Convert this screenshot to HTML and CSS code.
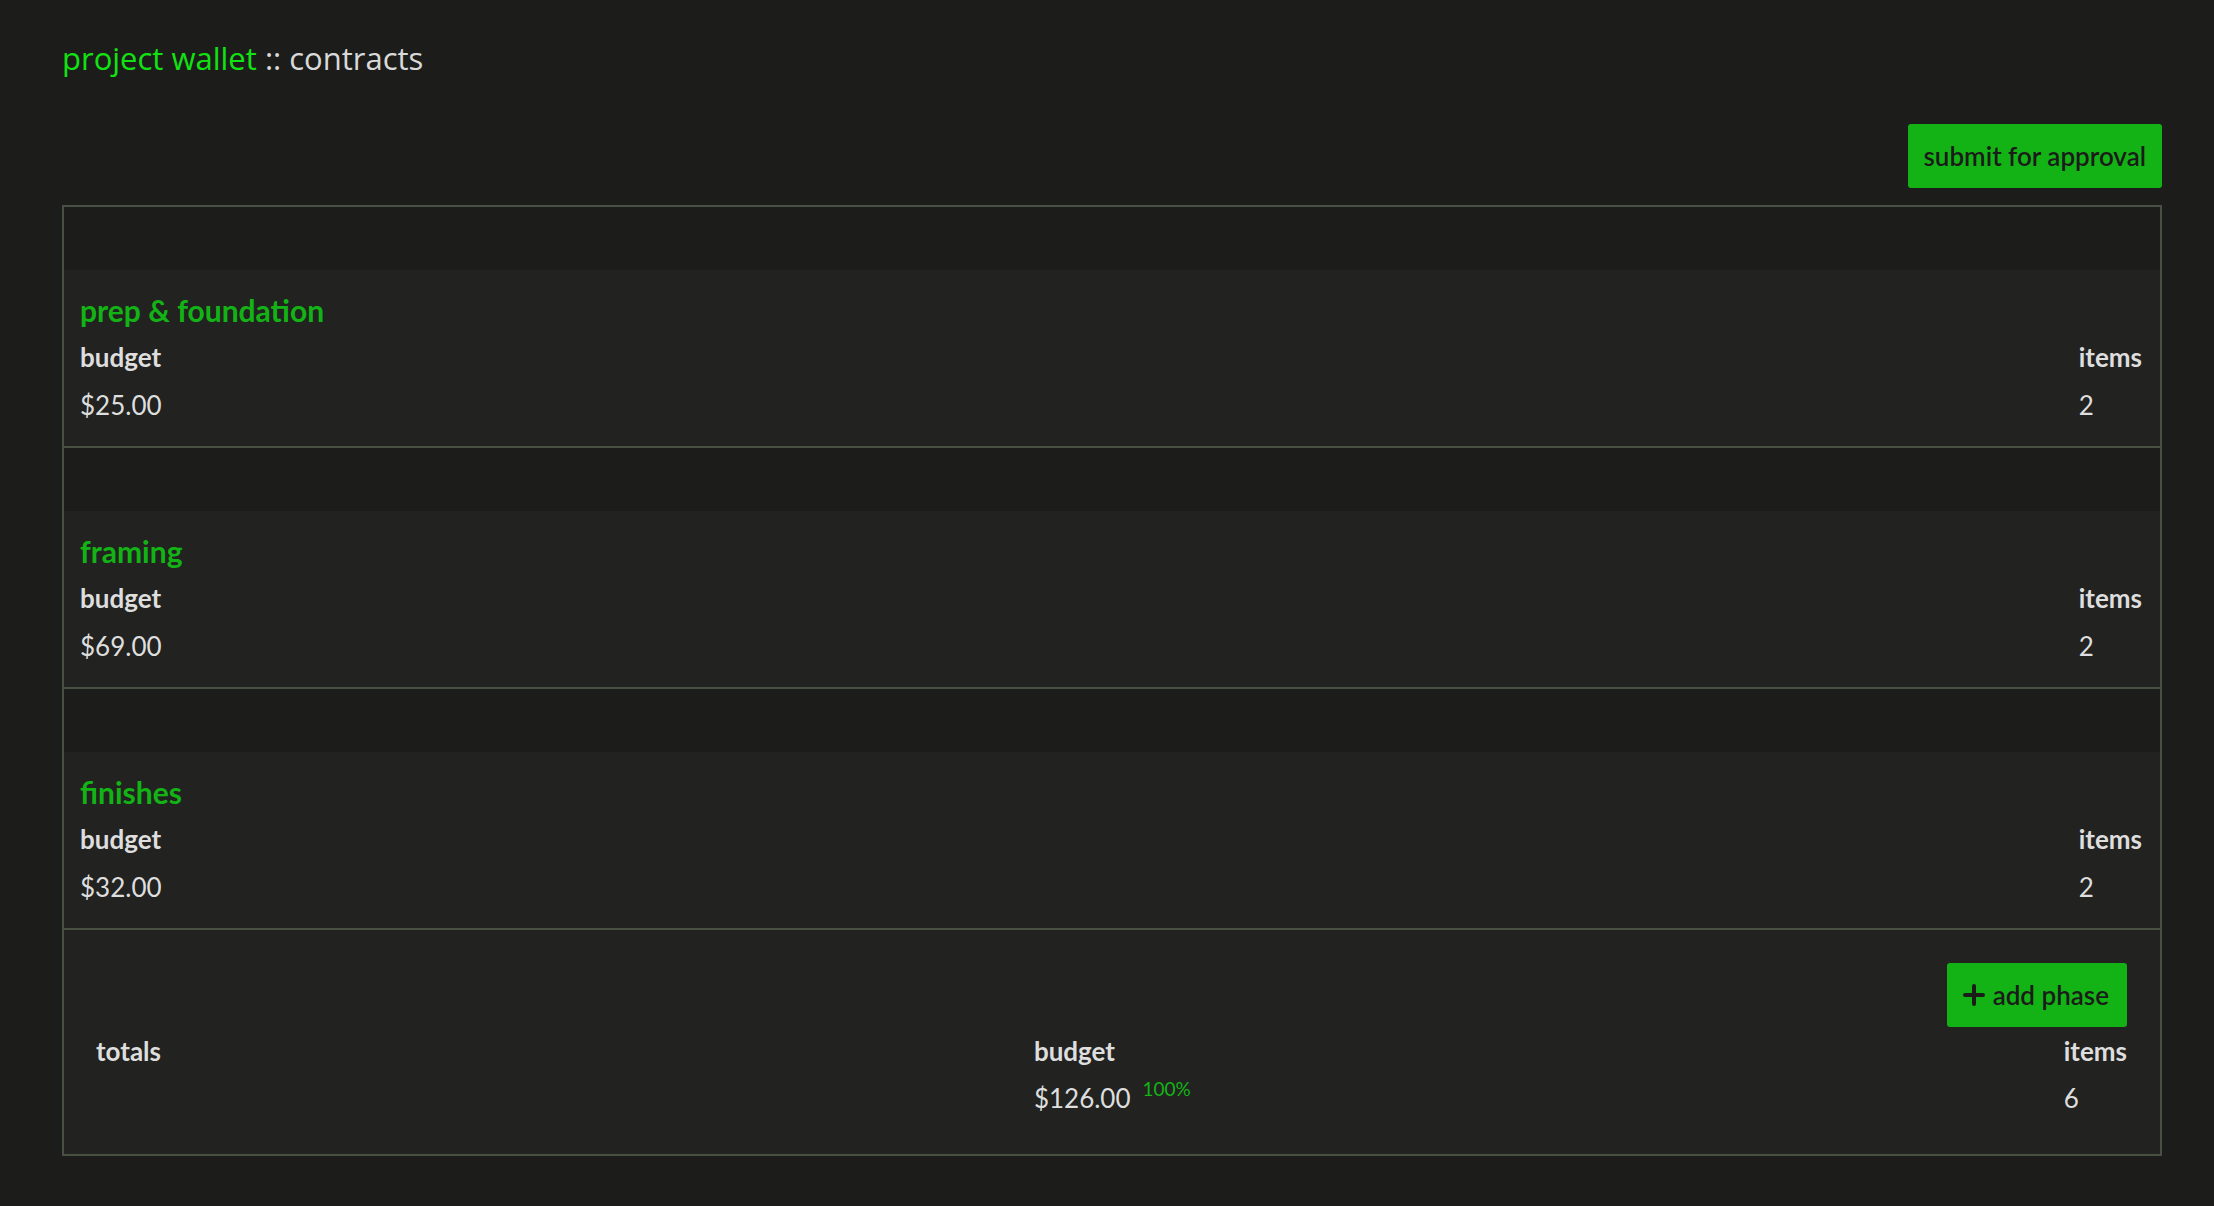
FILE: index.html
```html
<!DOCTYPE html>
<html lang="en">
<head>
    <meta charset="UTF-8">
    <meta name="viewport" content="width=device-width, initial-scale=1.0">
    <title>project wallet :: contracts</title>
    <link rel="stylesheet" href="styles.css">
</head>
<body>
    <div class="container">
        <h1 class="page-title"><span class="brand">project wallet</span> :: contracts</h1>

        <div class="toolbar">
            <button class="green-button">submit for approval</button>
        </div>

        <div class="phase-table">
            <div class="phase">
                <div class="phase-spacer"></div>
                <div class="phase-body">
                    <h2 class="phase-name">prep &amp; foundation</h2>
                    <div class="phase-row">
                        <div class="cell">
                            <div class="label">budget</div>
                            <div class="value">$25.00</div>
                        </div>
                        <div class="cell">
                            <div class="label">items</div>
                            <div class="value">2</div>
                        </div>
                    </div>
                </div>
            </div>

            <div class="phase">
                <div class="phase-spacer"></div>
                <div class="phase-body">
                    <h2 class="phase-name">framing</h2>
                    <div class="phase-row">
                        <div class="cell">
                            <div class="label">budget</div>
                            <div class="value">$69.00</div>
                        </div>
                        <div class="cell">
                            <div class="label">items</div>
                            <div class="value">2</div>
                        </div>
                    </div>
                </div>
            </div>

            <div class="phase">
                <div class="phase-spacer"></div>
                <div class="phase-body">
                    <h2 class="phase-name">finishes</h2>
                    <div class="phase-row">
                        <div class="cell">
                            <div class="label">budget</div>
                            <div class="value">$32.00</div>
                        </div>
                        <div class="cell">
                            <div class="label">items</div>
                            <div class="value">2</div>
                        </div>
                    </div>
                </div>
            </div>

            <div class="totals">
                <div class="totals-actions">
                    <button class="green-button add-button">
                        <svg class="plus-icon" width="22" height="22" viewBox="0 0 22 22">
                            <path d="M11 2v18M2 11h18" stroke="currentColor" stroke-width="4" stroke-linecap="round"/>
                        </svg>
                        add phase
                    </button>
                </div>
                <div class="phase-row totals-row">
                    <div class="cell">
                        <div class="label">totals</div>
                    </div>
                    <div class="cell">
                        <div class="label">budget</div>
                        <div class="value">$126.00<span class="percent">100%</span></div>
                    </div>
                    <div class="cell">
                        <div class="label">items</div>
                        <div class="value">6</div>
                    </div>
                </div>
            </div>
        </div>
    </div>
</body>
</html>
```

FILE: styles.css
```css
body {
    margin: 0;
    padding: 0;
    background-color: #1c1d1b;
    color: #dedede;
    font-family: "Lato", "Noto Sans", sans-serif;
    font-size: 26px;
}

.container {
    padding: 38px 52px 30px 62px;
}

.page-title {
    margin: 0;
    font-family: "Open Sans", "Noto Sans", sans-serif;
    font-weight: 400;
    font-size: 31px;
    line-height: 40px;
    color: #d9d9d9;
}

.brand {
    color: #12e212;
}

.toolbar {
    display: flex;
    justify-content: flex-end;
    margin-top: 46px;
    margin-bottom: 17px;
}

.green-button {
    display: flex;
    align-items: center;
    height: 64px;
    padding: 0 16px;
    border: none;
    border-radius: 3px;
    background-color: #13b316;
    color: #1b1c1a;
    font-family: "Lato", "Noto Sans", sans-serif;
    font-size: 26px;
    font-weight: 600;
    cursor: pointer;
}

.add-button {
    gap: 8px;
    padding: 0 18px 0 16px;
}

.phase-table {
    border: 2px solid #485044;
}

.phase {
    border-bottom: 2px solid #485044;
}

.phase-spacer {
    height: 63px;
    background-color: #1c1d1b;
}

.phase-body {
    padding: 17px 18px 17px 16px;
    background-color: #222321;
}

.phase-name {
    margin: 0;
    font-size: 30px;
    font-weight: 700;
    line-height: 46px;
    color: #13b316;
}

.phase-row {
    display: flex;
    justify-content: space-between;
}

.label {
    font-weight: 700;
    line-height: 48px;
}

.value {
    line-height: 48px;
}

.totals {
    padding: 33px 33px 33px 32px;
    background-color: #222321;
}

.totals-actions {
    display: flex;
    justify-content: flex-end;
}

.totals-row .value {
    line-height: 46px;
}

.percent {
    margin-left: 12px;
    font-size: 19px;
    line-height: 0;
    color: #13b316;
    vertical-align: 12px;
}
```
